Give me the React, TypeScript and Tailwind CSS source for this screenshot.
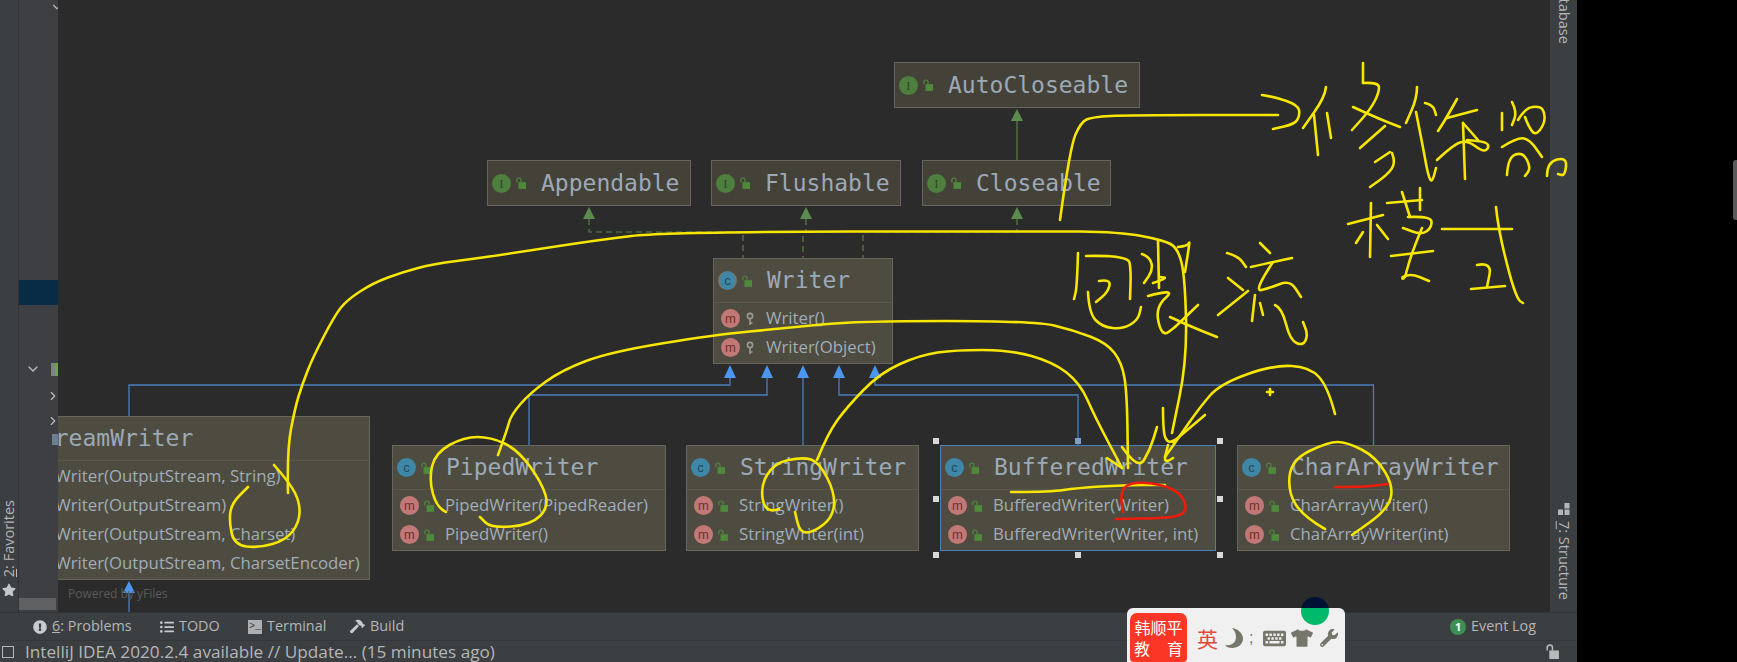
import React from "react";
import { ChevronDown, ChevronRight } from "lucide-react";
import { FaExclamationCircle, FaHammer, FaKeyboard, FaListUl, FaStar, FaTshirt, FaWrench } from "react-icons/fa";

const uiFont = "font-['Open_Sans',sans-serif]";
const cjkFont = "font-['Noto_Sans_CJK_SC',sans-serif]";

function LockOpen({ className }: { className: string }) {
  return (
    <svg viewBox="0 0 12 14" className={className} fill="currentColor">
      <rect x="3" y="6" width="9" height="8" />
      <path d="M1 6V3.5a2.5 2.5 0 0 1 5 0V6" fill="none" stroke="currentColor" strokeWidth="1.4" />
    </svg>
  );
}

function KeyIcon() {
  return (
    <svg viewBox="0 0 8 14" className="w-[8px] h-[14px] text-[#9a9a92]" fill="none" stroke="currentColor" strokeWidth="1.6">
      <circle cx="4" cy="4" r="2.6" />
      <path d="M4 7v6M4 11h2.5" />
    </svg>
  );
}

function Badge({ letter, tone }: { letter: string; tone: "c" | "i" | "m" | "a" }) {
  const tones = {
    c: "bg-[#3f87a6] text-[#1f4a5e] font-['Liberation_Sans',sans-serif]",
    a: "bg-[#3f87a6] text-[#1f4a5e] border-x-2 border-[#77776d] font-['Liberation_Sans',sans-serif]",
    i: "bg-[#4f7f3f] text-[#2d4a24] font-['Liberation_Serif',serif]",
    m: "bg-[#c27876] text-[#6e3230] font-['Liberation_Sans',sans-serif]",
  };
  return (
    <span className={`w-[19px] h-[19px] shrink-0 rounded-full flex items-center justify-center text-[13px] leading-none ${tones[tone]}`}>
      {letter}
    </span>
  );
}

type NodeProps = {
  title: string;
  pos: string;
  kind?: "c" | "i" | "a";
  methods?: string[];
  keyed?: boolean;
  selected?: boolean;
};

function UmlNode({ title, pos, kind = "c", methods, keyed, selected }: NodeProps) {
  const isIface = kind === "i";
  return (
    <div
      className={`absolute border ${pos} ${isIface ? "bg-[#444238]" : "bg-[#4e4c40]"} ${
        selected ? "border-[#4a80bd]" : "border-[#66665f]"
      }`}
    >
      <div className={`flex items-center pl-[4px] ${methods ? "h-[44px] border-b border-[#5a584c]" : "h-[44px]"}`}>
        <div className="w-[19px]">
          <Badge letter={kind === "i" ? "I" : "c"} tone={kind} />
        </div>
        <LockOpen className="w-[10px] h-[12px] ml-[5px] text-[#4f8a3c]" />
        <span className="ml-[15px] font-['DejaVu_Sans_Mono',monospace] text-[23px] leading-none text-[#9ca9b7] whitespace-nowrap">
          {title}
        </span>
      </div>
      {methods && (
        <div className="py-px">
          {methods.map((m) => (
            <div key={m} className="h-[29px] flex items-center pl-[7px]">
              <Badge letter="m" tone="m" />
              <span className="w-[10px] ml-[5px] flex justify-center">
                {keyed ? <KeyIcon /> : <LockOpen className="w-[10px] h-[12px] text-[#4f8a3c]" />}
              </span>
              <span className={`ml-[11px] ${uiFont} text-[16.8px] leading-none text-[#a0acb8] whitespace-nowrap`}>{m}</span>
            </div>
          ))}
        </div>
      )}
      {selected && (
        <>
          <i className="absolute -left-[8px] -top-[8px] w-[6px] h-[6px] bg-[#d8d8d8]" />
          <i className="absolute left-[134px] -top-[8px] w-[6px] h-[6px] bg-[#7fa0c4]" />
          <i className="absolute -right-[8px] -top-[8px] w-[6px] h-[6px] bg-[#d8d8d8]" />
          <i className="absolute -left-[8px] top-[50px] w-[6px] h-[6px] bg-[#d8d8d8]" />
          <i className="absolute -right-[8px] top-[50px] w-[6px] h-[6px] bg-[#d8d8d8]" />
          <i className="absolute -left-[8px] -bottom-[8px] w-[6px] h-[6px] bg-[#d8d8d8]" />
          <i className="absolute left-[134px] -bottom-[8px] w-[6px] h-[6px] bg-[#d8d8d8]" />
          <i className="absolute -right-[8px] -bottom-[8px] w-[6px] h-[6px] bg-[#d8d8d8]" />
        </>
      )}
    </div>
  );
}

// edges between the nodes, in page coordinates
function Edges() {
  const blueHeads = [730, 767, 803, 839, 875];
  const greenHeads = [
    [1017, 109],
    [589, 207],
    [806, 207],
    [1017, 207],
  ];
  return (
    <svg viewBox="58 0 1492 612" className="absolute inset-0 w-[1492px] h-[612px]" fill="none">
      <g stroke="#4a7dbd" strokeWidth="1.3">
        <path d="M730 376V385H129V416" />
        <path d="M767 376V395H529V445" />
        <path d="M803 376V445" />
        <path d="M839 376V395H1078V445" />
        <path d="M875 376V385H1373.5V445" />
        <path d="M129 590V612" />
      </g>
      {blueHeads.map((x) => (
        <polygon key={x} points={`${x},365 ${x - 6},378 ${x + 6},378`} fill="#4b97f0" />
      ))}
      <polygon points="129,581 123,593 135,593" fill="#4b97f0" />
      <g stroke="#56804a" strokeWidth="1.2">
        <path d="M1017 120V160" />
        <path d="M589 219V232H743V258" strokeDasharray="6 4" />
        <path d="M806 219V232H803V258" strokeDasharray="6 4" />
        <path d="M1017 219V232H863V258" strokeDasharray="6 4" />
      </g>
      {greenHeads.map(([x, y]) => (
        <polygon key={`${x}-${y}`} points={`${x},${y} ${x - 6},${y + 12} ${x + 6},${y + 12}`} fill="#5b8c4d" />
      ))}
    </svg>
  );
}

// freehand annotation, each entry is one pen stroke as x,y pairs
const yellowInk: number[][] = [
  // arrow to the top right
  [1060, 220, 1070, 147, 1081, 122, 1092, 117, 1129, 115, 1278, 115],
  [1262, 95, 1275, 97, 1298, 105, 1300, 115, 1295, 124, 1273, 129],
  [1326, 87, 1325, 97, 1303, 128],
  [1314, 115, 1318, 155],
  [1327, 113, 1331, 138],
  [1363, 63, 1363, 83],
  [1363, 83, 1379, 82, 1379, 93, 1370, 110, 1352, 130],
  [1353, 107, 1377, 118, 1400, 127],
  [1385, 126, 1360, 148],
  [1375, 162, 1390, 152],
  [1392, 153, 1396, 163, 1387, 175, 1370, 187],
  [1417, 87, 1417, 98, 1406, 123],
  [1416, 112, 1423, 147, 1428, 175, 1432, 183, 1436, 168],
  [1425, 103, 1433, 105, 1436, 115],
  [1457, 99, 1447, 117, 1438, 131],
  [1447, 118, 1477, 110],
  [1437, 160, 1453, 145, 1467, 140, 1483, 152, 1489, 148, 1487, 142, 1467, 140],
  [1463, 123, 1465, 179],
  [1463, 123, 1478, 140],
  [1502, 113, 1502, 130],
  [1512, 102, 1517, 112, 1512, 125],
  [1518, 120, 1525, 108, 1540, 106, 1545, 113, 1544, 125, 1535, 136, 1528, 125, 1525, 117],
  [1502, 147, 1518, 137, 1530, 140, 1542, 157],
  [1507, 175, 1508, 157, 1523, 152, 1531, 168, 1525, 176],
  [1547, 176, 1547, 162, 1567, 157, 1565, 176, 1558, 174],
  [1348, 224, 1383, 215],
  [1371, 203, 1370, 257],
  [1363, 232, 1356, 243],
  [1377, 225, 1388, 239],
  [1387, 203, 1422, 200],
  [1402, 192, 1410, 217],
  [1420, 188, 1420, 210],
  [1408, 217, 1431, 216, 1432, 227, 1422, 235, 1403, 228],
  [1422, 228, 1412, 252, 1405, 277],
  [1391, 256, 1433, 251],
  [1403, 277, 1410, 273, 1429, 281],
  [1442, 229, 1512, 229],
  [1496, 207, 1498, 227, 1510, 277, 1518, 300, 1523, 303],
  [1477, 265, 1492, 262, 1487, 287],
  [1471, 289, 1505, 286],
  // middle note
  [1078, 253, 1077, 287, 1074, 299],
  [1086, 256, 1128, 255, 1131, 270, 1130, 299],
  [1099, 281, 1111, 279, 1108, 292, 1096, 302],
  [1088, 292, 1089, 313, 1102, 327, 1123, 329, 1138, 320, 1141, 307],
  [1142, 254, 1150, 257, 1153, 270, 1144, 283],
  [1158, 240, 1159, 288],
  [1153, 283, 1168, 278, 1160, 277],
  [1148, 296, 1177, 288, 1155, 307, 1162, 337, 1175, 327],
  [1170, 317, 1187, 325, 1217, 337],
  [1198, 305, 1175, 327],
  [1178, 247, 1188, 246, 1190, 240, 1185, 272],
  [1227, 253, 1238, 256, 1246, 267],
  [1228, 278, 1243, 290],
  [1248, 291, 1218, 315],
  [1260, 243, 1270, 253],
  [1251, 267, 1273, 262, 1292, 258],
  [1273, 262, 1253, 292, 1270, 288, 1290, 280, 1301, 297],
  [1255, 295, 1252, 321],
  [1260, 303, 1263, 315],
  [1275, 305, 1282, 308, 1290, 340, 1303, 346, 1308, 335, 1303, 322],
  // long lines to BufferedWriter
  [288, 493, 287, 450, 295, 408, 302, 385, 313, 357, 335, 315, 347, 300, 373, 283, 403, 272, 433, 264, 480, 258, 520, 252, 598, 240, 665, 232, 1040, 231, 1120, 232, 1163, 240, 1178, 248, 1185, 277, 1187, 360, 1172, 433],
  [274, 465, 290, 483, 300, 503, 299, 523, 286, 540, 259, 548, 234, 545, 229, 520, 232, 503, 248, 487],
  [498, 455, 507, 430, 511, 415, 530, 393, 562, 370, 610, 352, 713, 335, 786, 328, 857, 321, 1035, 321, 1073, 330, 1107, 343, 1122, 363, 1127, 393, 1128, 468],
  [1107, 458, 1122, 468],
  [1122, 447, 1138, 470, 1150, 450, 1157, 427],
  [817, 460, 828, 433, 847, 407, 880, 373, 920, 355, 955, 350, 1010, 350, 1053, 362, 1080, 383, 1095, 417, 1122, 468],
  [1335, 414, 1328, 387, 1310, 367, 1273, 365, 1220, 384, 1200, 407, 1177, 440, 1165, 457],
  [1205, 415, 1173, 442],
  [1163, 408, 1163, 433, 1168, 443, 1175, 440],
  [1173, 458, 1163, 465, 1168, 445],
  // circles around the class names
  [446, 512, 437, 508, 429, 480, 435, 453, 464, 437, 491, 437, 518, 450, 542, 483, 549, 507, 531, 525, 491, 528, 480, 517],
  [779, 509, 766, 514, 760, 487, 774, 463, 803, 457, 819, 462, 835, 493, 833, 517, 814, 532, 800, 533, 795, 512],
  [1325, 529, 1304, 517, 1288, 493, 1291, 460, 1328, 442, 1347, 442, 1376, 457, 1394, 487, 1387, 510, 1352, 535],
  [1011, 492, 1050, 492, 1077, 488, 1123, 485, 1165, 485],
  [1267, 392, 1273, 392],
  [1270, 389, 1270, 395],
];

const redInk: number[][] = [
  [1123, 512, 1120, 497, 1125, 485, 1140, 482, 1163, 485, 1180, 493, 1187, 507, 1182, 515, 1167, 518, 1116, 519],
  [1335, 487, 1363, 487, 1388, 484],
];

function strokePath(p: number[]) {
  let d = `M${p[0]} ${p[1]}`;
  if (p.length === 4) return `${d}L${p[2]} ${p[3]}`;
  for (let i = 2; i < p.length - 2; i += 2) {
    d += `Q${p[i]} ${p[i + 1]} ${(p[i] + p[i + 2]) / 2} ${(p[i + 1] + p[i + 3]) / 2}`;
  }
  return `${d}L${p[p.length - 2]} ${p[p.length - 1]}`;
}

function Ink() {
  return (
    <svg viewBox="0 0 1737 662" className="absolute inset-0 w-[1737px] h-[662px] pointer-events-none" fill="none" strokeLinecap="round" strokeLinejoin="round">
      <g stroke="#f7e600" strokeWidth="2.6">
        {yellowInk.map((s, i) => (
          <path key={i} d={strokePath(s)} />
        ))}
      </g>
      <circle cx="1403" cy="278" r="2" fill="#f7e600" />
      <g stroke="#ee1c0c" strokeWidth="2.6">
        {redInk.map((s, i) => (
          <path key={i} d={strokePath(s)} />
        ))}
      </g>
    </svg>
  );
}

function InputWidget() {
  return (
    <div className="absolute left-[1127px] top-[608px] w-[218px] h-[54px] rounded-t-[6px] bg-[#f0f0f0] flex items-start pl-[3px] pt-[5px]">
      <div className={`w-[57px] h-[49px] rounded-t-[7px] rounded-b-[4px] bg-[#fb3626] text-white text-[16px] leading-[21px] text-center pt-[4px] ${cjkFont}`}>
        <div>韩顺平</div>
        <div className="flex justify-between px-[4px]">
          <span>教</span>
          <span>育</span>
        </div>
      </div>
      <div className="flex items-center h-[50px] text-[#77766b]">
        <span className={`ml-[10px] text-[21px] leading-none text-[#e2483a] ${cjkFont}`}>英</span>
        <svg viewBox="0 0 18 20" className="ml-[7px] w-[18px] h-[20px]" fill="currentColor">
          <path d="M7 0C13 1 18 5 18 11c0 5-5 9-11 9-3 0-6-1-7-3 6 1 11-2 11-8 0-4-2-7-4-9Z" />
        </svg>
        <span className="ml-[6px] text-[16px] leading-none font-['Liberation_Sans',sans-serif]">;</span>
        <FaKeyboard className="ml-[10px] w-[23px] h-[23px]" />
        <FaTshirt className="ml-[5px] w-[22px] h-[20px]" />
        <FaWrench className="ml-[7px] w-[18px] h-[18px]" />
      </div>
    </div>
  );
}

function ToolTab({ icon, children, gap }: { icon: React.ReactNode; children: React.ReactNode; gap: string }) {
  return (
    <div className={`flex items-center gap-[5px] ${gap}`}>
      {icon}
      <span className="text-[14.4px] leading-none text-[#b4b6b8] whitespace-nowrap">{children}</span>
    </div>
  );
}

export default function App() {
  return (
    <div className={`relative w-[1737px] h-[662px] overflow-hidden flex bg-black ${uiFont}`}>
      <div className="w-[1577px] h-full flex flex-col">
        <div className="flex-1 flex min-h-0">
          {/* left tool strip */}
          <div className="w-[19px] bg-[#3c3f41] border-r border-[#323436] flex flex-col items-center justify-end pb-[15px] text-[#b4b6b8]">
            <span className="[writing-mode:vertical-rl] rotate-180 text-[14.5px] leading-none whitespace-nowrap">
              <u>2</u>: Favorites
            </span>
            <FaStar className="w-[14px] h-[14px] mt-[6px] text-[#c4c6c8]" />
          </div>

          {/* project tree, cut off by the diagram */}
          <div className="w-[39px] bg-[#3d3f42] flex flex-col text-[#b8babc]">
            <div className="h-[16px] flex justify-end overflow-hidden">
              <ChevronDown className="w-[14px] h-[14px] -mr-[6px]" />
            </div>
            <div className="mt-[264px] h-[25px] bg-[#082c45]" />
            <div className="mt-[50px] h-[28px] flex items-center justify-between">
              <ChevronDown className="ml-[6px] w-[16px] h-[16px]" />
              <span className="w-[7px] h-[13px] flex">
                <i className="w-[4px] bg-[#808285]" />
                <i className="w-[3px] bg-[#6da544]" />
              </span>
            </div>
            <div className="h-[26px] flex items-center justify-end overflow-hidden">
              <ChevronRight className="w-[14px] h-[14px] -mr-[2px]" />
            </div>
            <div className="h-[24px] flex items-center justify-end overflow-hidden">
              <ChevronRight className="w-[14px] h-[14px] -mr-[2px]" />
            </div>
            <div className="h-[12px] flex items-center justify-end">
              <span className="w-[6px] h-[11px] bg-[#6d7f92]" />
            </div>
            <div className="mt-auto mb-[2px] mr-[2px] h-[12px] bg-[#5f6163]" />
          </div>

          {/* diagram */}
          <div className="relative flex-1 bg-[#2b2b2b] overflow-hidden">
            <Edges />
            <UmlNode title="AutoCloseable" kind="i" pos="left-[836px] top-[62px] w-[246px]" />
            <UmlNode title="Appendable" kind="i" pos="left-[429px] top-[160px] w-[204px]" />
            <UmlNode title="Flushable" kind="i" pos="left-[653px] top-[160px] w-[190px]" />
            <UmlNode title="Closeable" kind="i" pos="left-[864px] top-[160px] w-[189px]" />
            <UmlNode title="Writer" kind="a" keyed pos="left-[655px] top-[258px] w-[180px]" methods={["Writer()", "Writer(Object)"]} />
            <UmlNode
              title="OutputStreamWriter"
              pos="-left-[168px] top-[416px] w-[480px]"
              methods={[
                "OutputStreamWriter(OutputStream, String)",
                "OutputStreamWriter(OutputStream)",
                "OutputStreamWriter(OutputStream, Charset)",
                "OutputStreamWriter(OutputStream, CharsetEncoder)",
              ]}
            />
            <UmlNode title="PipedWriter" pos="left-[334px] top-[445px] w-[274px]" methods={["PipedWriter(PipedReader)", "PipedWriter()"]} />
            <UmlNode title="StringWriter" pos="left-[628px] top-[445px] w-[233px]" methods={["StringWriter()", "StringWriter(int)"]} />
            <UmlNode title="BufferedWriter" selected pos="left-[882px] top-[445px] w-[276px]" methods={["BufferedWriter(Writer)", "BufferedWriter(Writer, int)"]} />
            <UmlNode title="CharArrayWriter" pos="left-[1179px] top-[445px] w-[273px]" methods={["CharArrayWriter()", "CharArrayWriter(int)"]} />
            <span className="absolute left-[10px] top-[588px] text-[12px] leading-none text-[#5a5a5a]">Powered by yFiles</span>
          </div>

          {/* right tool strip */}
          <div className="w-[27px] bg-[#3c3f41] flex flex-col items-center pb-[12px] text-[#b4b6b8]">
            <span className="[writing-mode:vertical-rl] text-[14.5px] leading-none h-[44px] overflow-hidden flex items-end justify-end whitespace-nowrap">
              Database
            </span>
            <svg viewBox="0 0 12 12" className="mt-auto w-[12px] h-[12px]" fill="currentColor">
              <rect x="6.5" y="0" width="5" height="5.5" />
              <rect x="0" y="6.5" width="5" height="5.5" />
              <rect x="6.5" y="6.5" width="5" height="5.5" />
            </svg>
            <span className="mt-[6px] [writing-mode:vertical-rl] text-[14.5px] leading-none whitespace-nowrap">
              <u>7</u>: Structure
            </span>
          </div>
        </div>

        <div className="h-[28px] bg-[#3c3f41] border-t border-[#323436] flex items-center pl-[33px] text-[#b4b6b8]">
          <ToolTab gap="w-[127px]" icon={<FaExclamationCircle className="w-[14px] h-[14px] text-[#c8cacc]" />}>
            <u>6</u>: Problems
          </ToolTab>
          <ToolTab gap="w-[88px]" icon={<FaListUl className="w-[14px] h-[14px] text-[#c8cacc]" />}>
            TODO
          </ToolTab>
          <ToolTab
            gap="w-[102px]"
            icon={
              <span className="w-[14px] h-[14px] bg-[#aeb0b2] text-[#3c3f41] text-[10px] leading-[14px] font-['Liberation_Mono',monospace] pl-px">
                &gt;_
              </span>
            }
          >
            Terminal
          </ToolTab>
          <ToolTab gap="w-[60px]" icon={<FaHammer className="w-[15px] h-[15px] text-[#c8cacc]" />}>
            Build
          </ToolTab>
          <div className="ml-auto mr-[41px] flex items-center gap-[5px]">
            <span className="w-[16px] h-[16px] rounded-full bg-[#3f8f52] text-white text-[11px] font-bold leading-none flex items-center justify-center">1</span>
            <span className="text-[14.4px] leading-none text-[#b4b6b8]">Event Log</span>
          </div>
        </div>

        <div className="h-[22px] bg-[#3c3f41] border-t border-[#353739] flex items-center pl-[2px] text-[#b4b6b8]">
          <span className="w-[12px] h-[12px] border border-[#b4b6b8]" />
          <span className="ml-[11px] text-[17.2px] leading-none whitespace-nowrap">IntelliJ IDEA 2020.2.4 available // Update... (15 minutes ago)</span>
          <LockOpen className="ml-auto mr-[18px] w-[13px] h-[15px] text-[#b8babc]" />
        </div>
      </div>

      {/* black area right of the window */}
      <div className="flex-1 flex justify-end pt-[160px]">
        <div className="w-[4px] h-[60px] rounded-l-[3px] bg-[#5a5a5a]" />
      </div>

      <Ink />
      <InputWidget />
      <span className="absolute left-[1301px] top-[597px] w-[28px] h-[28px] rounded-full bg-[linear-gradient(#001233_0%,#001233_39%,#00b96b_39%)]" />
    </div>
  );
}
